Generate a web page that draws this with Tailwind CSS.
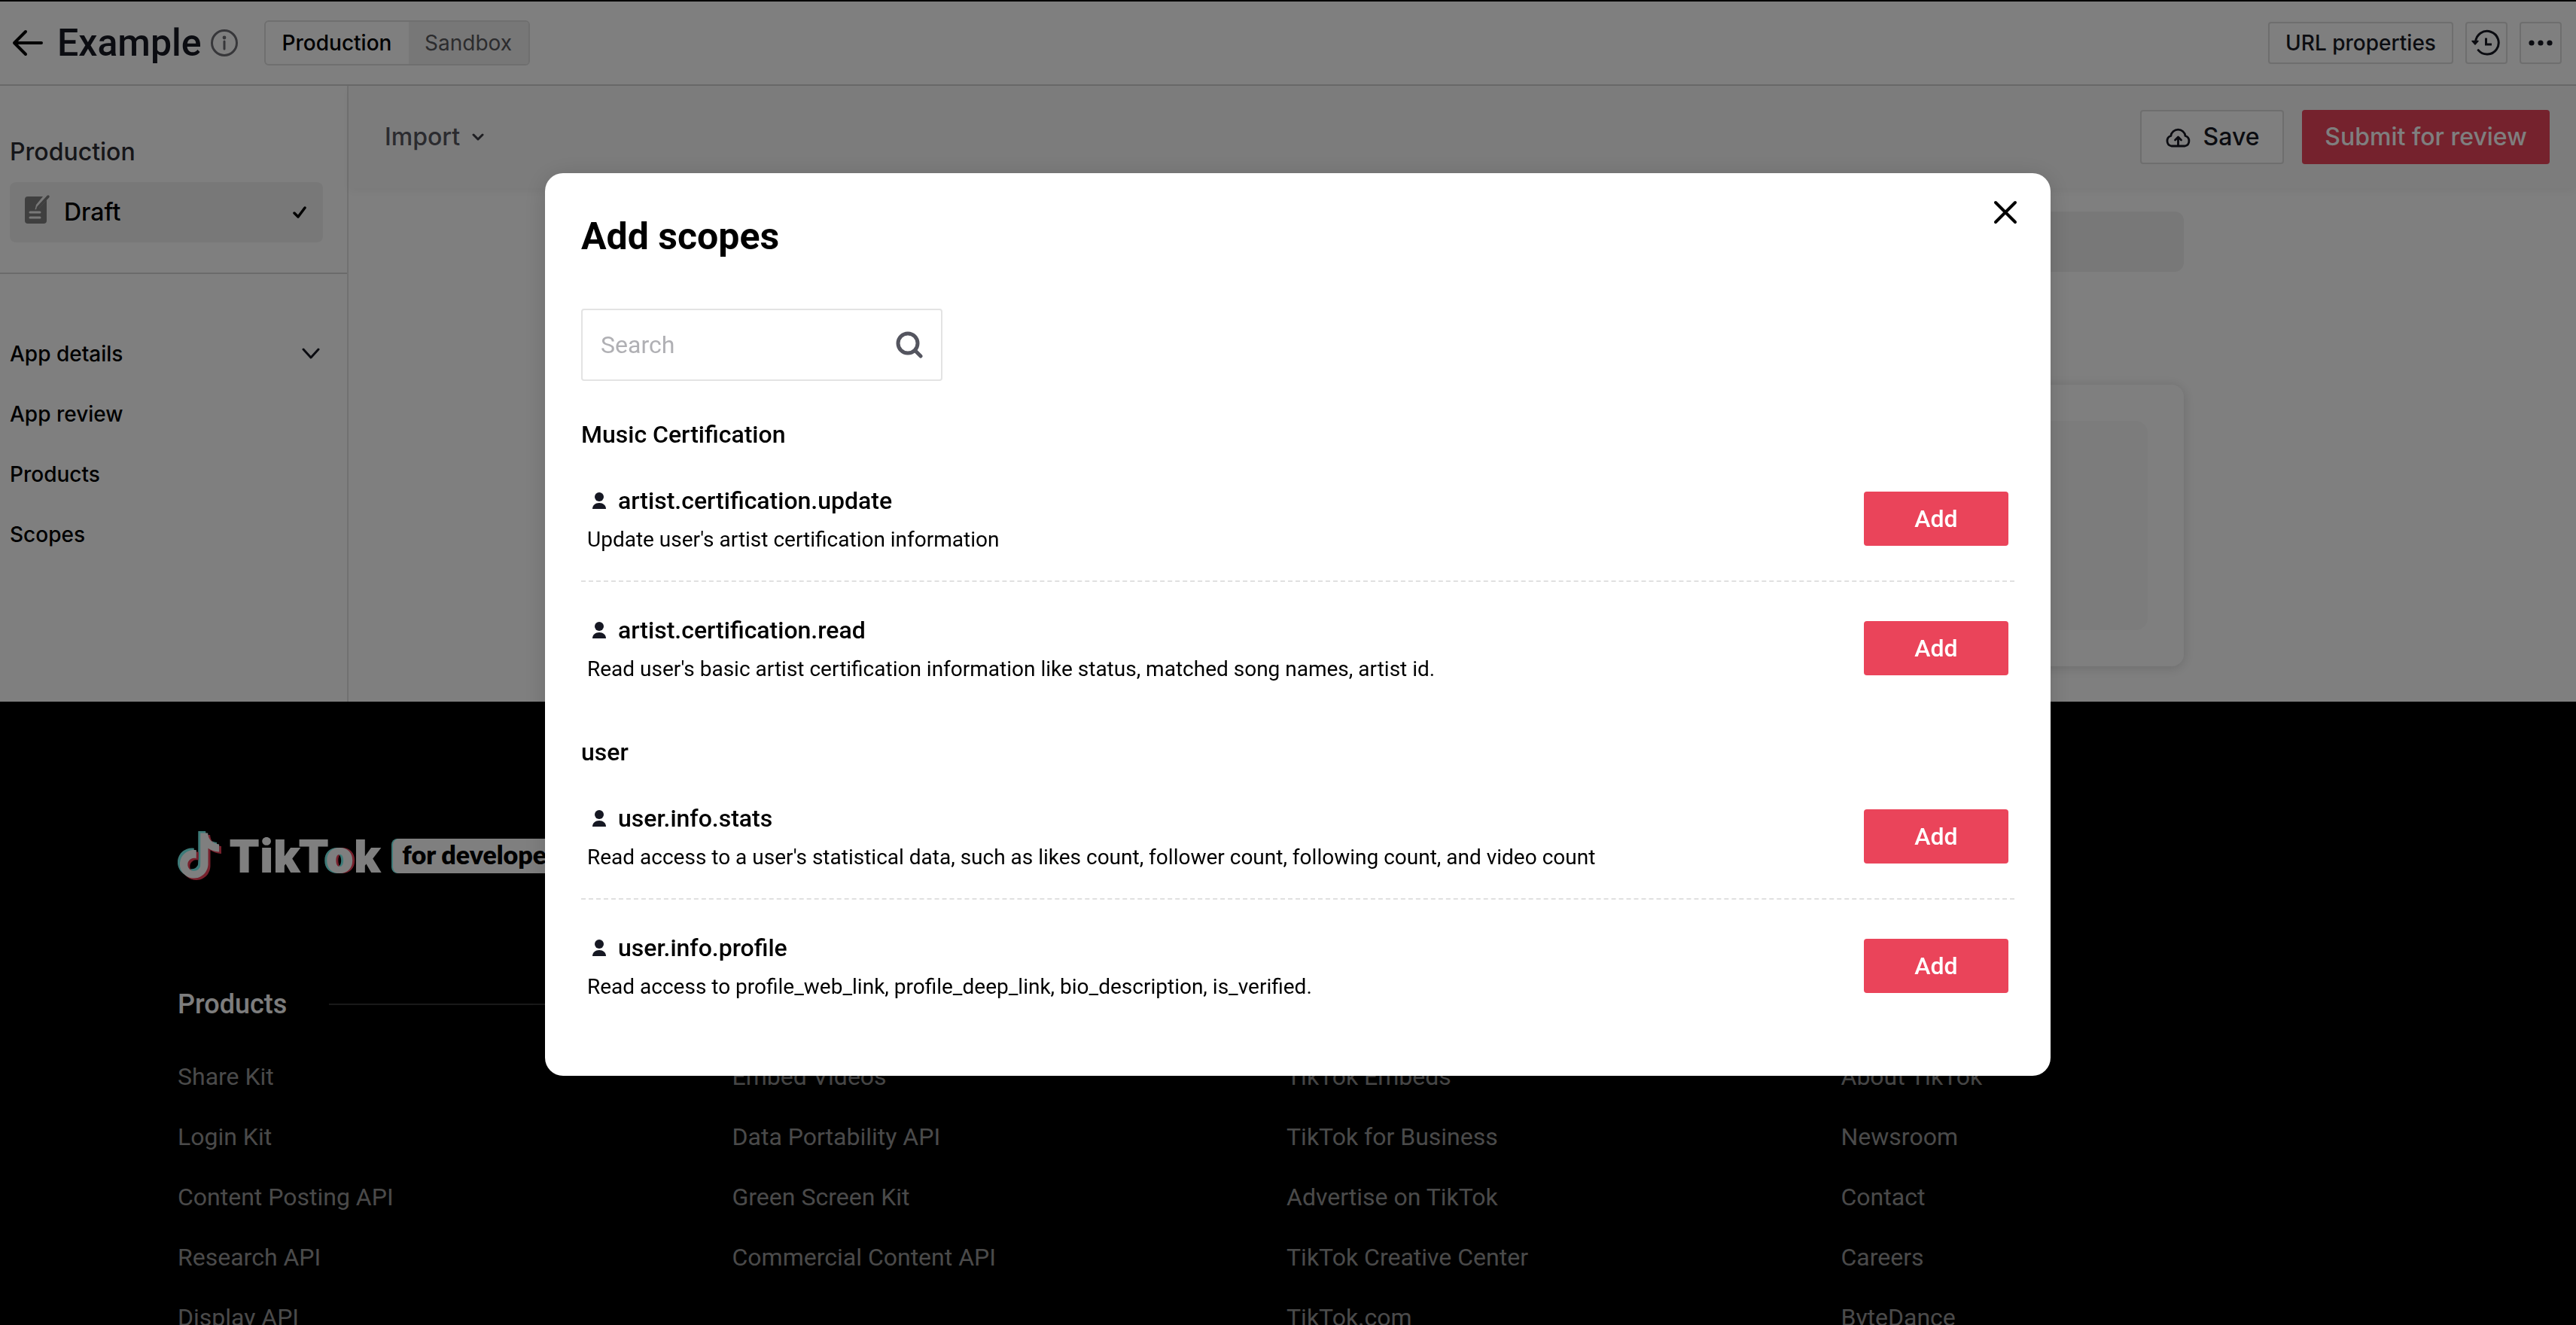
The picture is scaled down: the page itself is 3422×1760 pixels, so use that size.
<!DOCTYPE html>
<html lang="en">
<head>
<meta charset="utf-8">
<title>Example - Add scopes</title>
<script src="https://cdn.jsdelivr.net/npm/@tailwindcss/browser@4"></script>
</head>
<body class="h-screen overflow-hidden bg-black font-['Inter',sans-serif] text-[#161823]">

<div class="border-t-2 border-black bg-white">
  <header class="flex h-28 items-center justify-between border-b-2 border-[#d2d2d2] pr-[19px] pl-4">
    <div class="flex items-center">
      <button type="button" aria-label="Back">
        <svg class="h-9 w-[42px]" viewBox="0 0 42 36" fill="none" stroke="#000" stroke-width="4" stroke-linecap="round" stroke-linejoin="round"><path d="M18 3 3 18l15 15M3 18h36"/></svg>
      </button>
      <h1 class="pl-[18px] font-['Roboto',sans-serif] text-[50px] leading-14 font-medium">Example</h1>
      <svg class="ml-3 size-9" viewBox="0 0 36 36" fill="none"><circle cx="18" cy="18" r="16.5" stroke="#6e6e75" stroke-width="3"/><path d="M18 16v10" stroke="#6e6e75" stroke-width="3" stroke-linecap="round"/><circle cx="18" cy="11" r="2.4" fill="#6e6e75"/></svg>
      <div class="ml-[35px] flex h-15 overflow-hidden rounded-md border-2 border-[#dedede] text-[28px]">
        <button type="button" class="w-[190px] font-medium text-black">Production</button>
        <button type="button" class="w-[159px] bg-[#eeeeee] text-[#58585c]">Sandbox</button>
      </div>
    </div>
    <div class="flex gap-4">
      <button type="button" class="h-14 w-[246px] rounded border-2 border-[#dcdcdc] text-[28px] font-medium">URL properties</button>
      <button type="button" aria-label="History" class="flex size-14 items-center justify-center rounded border-2 border-[#dcdcdc]">
        <svg class="size-10" viewBox="0 0 40 40" fill="none" stroke="#161823" stroke-width="3"><path d="M5.6 19A15.3 15.3 0 1 1 9.2 29.6" stroke-linecap="round"/><path d="M19.5 13.5V22H27"/><path d="M1 17.5h8L5 22z" fill="#161823" stroke-width="1.5" stroke-linejoin="round"/></svg>
      </button>
      <button type="button" aria-label="More" class="flex size-14 items-center justify-center rounded border-2 border-[#dcdcdc]">
        <svg class="h-2 w-8" viewBox="0 0 32 8" fill="#161823"><circle cx="4" cy="4" r="3.6"/><circle cx="16" cy="4" r="3.6"/><circle cx="28" cy="4" r="3.6"/></svg>
      </button>
    </div>
  </header>

  <div class="flex">
    <aside class="w-[463px] shrink-0 border-r-2 border-[#e3e3e3] pb-[182px]">
      <div class="border-b-2 border-[#d6d6d6] pt-16 pr-8 pb-10 pl-[13px]">
        <h2 class="text-[32px] leading-12 font-medium text-[#2c2c33]">Production</h2>
        <button type="button" class="mt-4 flex h-20 w-full items-center rounded-lg bg-[#f1f1f1] pl-[18px] text-black">
          <svg class="mb-2 h-10 w-9 shrink-0" viewBox="0 0 36 40"><path fill="#7e7e7e" d="M6 3h20l-9 11-1.500 6.500 5.500-2 10-11V35a4 4 0 0 1-4 4H6a4 4 0 0 1-4-4V7a4 4 0 0 1 4-4z"/><path d="M33 3 20 17l-1 2" fill="none" stroke="#7e7e7e" stroke-width="3.500" stroke-linecap="round"/><path d="M9 24h13M9 31h13" stroke="#f1f1f1" stroke-width="3" stroke-linecap="round"/></svg>
          <span class="ml-[18px] text-[32px] font-medium">Draft</span>
          <svg class="mr-[22px] ml-auto h-4 w-[18px]" viewBox="0 0 18 16" fill="none" stroke="#000" stroke-width="3.500" stroke-linecap="round" stroke-linejoin="round"><path d="M2 9l5 5L16 2"/></svg>
        </button>
      </div>
      <nav class="flex flex-col pt-[66px] pl-[13px] text-[28px] leading-20 font-medium text-black">
        <a href="#details" class="flex items-center justify-between pr-9">App details
          <svg class="h-4 w-6" viewBox="0 0 24 16" fill="none" stroke="#161823" stroke-width="3" stroke-linecap="round" stroke-linejoin="round"><path d="M2 2l10 11L22 2"/></svg>
        </a>
        <a href="#review">App review</a>
        <a href="#products">Products</a>
        <a href="#scopes">Scopes</a>
      </nav>
    </aside>

    <main class="min-w-0 flex-1">
      <div class="flex h-[136px] items-center justify-between bg-[#f8f8f8] pr-[35px] pl-12 shadow-[0_4px_12px_rgba(0,0,0,0.05)]">
        <button type="button" class="flex items-center gap-4 text-[32px] font-medium text-[#57575f]">Import
          <svg class="h-[10px] w-4" viewBox="0 0 16 10" fill="none" stroke="#3c3c44" stroke-width="3" stroke-linecap="round" stroke-linejoin="round"><path d="M2 2l6 6 6-6"/></svg>
        </button>
        <div class="flex gap-6 text-[32px] font-medium">
          <button type="button" class="flex h-18 w-[191px] items-center justify-center gap-4 rounded border-2 border-[#dcdcdc] bg-white">
            <svg class="h-[27px] w-[35px]" viewBox="0 0 35 27" fill="none" stroke="#161823" stroke-width="2.800" stroke-linecap="round" stroke-linejoin="round"><path d="M8.500 25a7 7 0 0 1-.7-13.500A9.700 9.700 0 0 1 27 11.500 7 7 0 0 1 26.500 25z"/><path d="M17.500 24V13.500M13.500 17l4-4 4 4"/></svg>
            Save
          </button>
          <button type="button" class="h-18 w-[329px] rounded bg-[#ea445a] text-white">Submit for review</button>
        </div>
      </div>
      <div class="mx-auto w-full max-w-[1916px] pt-[31px]">
        <div class="h-20 rounded-xl bg-[#f1f1f1]"></div>
        <div class="mt-[150px] h-[374px] rounded-2xl p-12 shadow-[0_2px_16px_rgba(0,0,0,0.16)]">
          <div class="h-full rounded-2xl bg-[#f8f8f8]"></div>
        </div>
      </div>
    </main>
  </div>
</div>

<footer class="bg-black pt-[171px] pr-[240px] pl-[236px] font-['Roboto',sans-serif]">
  <div class="flex h-[68px] items-center">
    <svg class="h-[66px] w-[58px]" viewBox="0 0 58 66">
      <defs><path id="note" d="M12.525.02c1.31-.02 2.61-.01 3.91-.02.08 1.53.63 3.09 1.75 4.17 1.12 1.11 2.7 1.62 4.24 1.79v4.03c-1.44-.05-2.89-.35-4.2-.97-.57-.26-1.1-.59-1.62-.93-.01 2.92.01 5.84-.02 8.75-.08 1.4-.54 2.79-1.35 3.94-1.31 1.92-3.58 3.17-5.91 3.21-1.43.08-2.86-.31-4.08-1.03-2.02-1.19-3.44-3.37-3.65-5.71-.02-.5-.03-1-.01-1.49.18-1.9 1.12-3.72 2.58-4.96 1.66-1.44 3.98-2.13 6.15-1.72.02 1.48-.04 2.96-.04 4.44-.99-.32-2.15-.23-3.02.37-.63.41-1.11 1.04-1.36 1.75-.21.51-.15 1.07-.14 1.61.24 1.64 1.82 3.02 3.5 2.87 1.12-.01 2.19-.66 2.77-1.61.19-.33.4-.67.41-1.06.1-1.79.06-3.57.07-5.36.01-4.03-.01-8.05.02-12.07z"/></defs>
      <use href="#note" transform="translate(-4 0) scale(2.5)" fill="#7af5f0"/>
      <use href="#note" transform="translate(2 5) scale(2.5)" fill="#ee4058"/>
      <use href="#note" transform="translate(-1 2.500) scale(2.5)" fill="#fff"/>
    </svg>
    <span class="ml-[10px] font-['Inter',sans-serif] text-[60px] leading-[68px] font-black text-white">TikT<span class="[text-shadow:-3px_0_#7af5f0,3px_0_#ee4058]">o</span>k</span>
    <span class="ml-4 h-[46px] rounded-lg bg-white px-3 font-['Lato',sans-serif] text-[34px] leading-[42px] font-extrabold whitespace-nowrap text-black shadow-[-2px_0_#7af5f0,2px_0_#ee4058]">for developers</span>
  </div>
  <div class="mt-[139px] flex w-1/2 items-center gap-14 pr-12">
    <h2 class="text-[36px] leading-12 font-medium text-[#fafafa]">Products</h2>
    <div class="h-[2px] flex-1 bg-[#333333]"></div>
  </div>
  <div class="mt-8 grid grid-cols-4 text-[32px] leading-20 text-[#949494]">
    <nav class="flex flex-col"><a href="#share">Share Kit</a><a href="#login">Login Kit</a><a href="#posting">Content Posting API</a><a href="#research">Research API</a><a href="#display">Display API</a></nav>
    <nav class="flex flex-col"><a href="#embed">Embed Videos</a><a href="#portability">Data Portability API</a><a href="#green">Green Screen Kit</a><a href="#commercial">Commercial Content API</a></nav>
    <nav class="flex flex-col"><a href="#embeds">TikTok Embeds</a><a href="#business">TikTok for Business</a><a href="#advertise">Advertise on TikTok</a><a href="#creative">TikTok Creative Center</a><a href="#tiktok">TikTok.com</a></nav>
    <nav class="flex flex-col"><a href="#about">About TikTok</a><a href="#newsroom">Newsroom</a><a href="#contact">Contact</a><a href="#careers">Careers</a><a href="#bytedance">ByteDance</a></nav>
  </div>
</footer>

<svg class="hidden"><symbol id="person" viewBox="0 0 18 24"><circle cx="9" cy="7" r="6" fill="#161823"/><path d="M0 23c0-5 4-8 9-8s9 3 9 8z" fill="#161823"/></symbol></svg>

<div class="fixed inset-0 flex items-start justify-center bg-black/50 pt-[230px] pl-[26px] font-['Roboto',sans-serif] text-black">
  <section role="dialog" aria-modal="true" aria-labelledby="title" class="relative w-full max-w-[2000px] rounded-3xl bg-white px-12 pt-[52px] pb-[62px] shadow-[0_4px_32px_rgba(0,0,0,0.15)]">
    <button type="button" aria-label="Close" class="absolute top-9 right-11">
      <svg class="size-8" viewBox="0 0 32 32" stroke="#000" stroke-width="4" stroke-linecap="round"><path d="M3 3l26 26M29 3 3 29"/></svg>
    </button>
    <h2 id="title" class="text-[50px] leading-16 font-bold">Add scopes</h2>
    <label class="mt-16 flex h-24 w-[480px] items-center rounded border-2 border-[#e3e3e3] pr-6 pl-6">
      <input type="text" placeholder="Search" aria-label="Search" class="min-w-0 flex-1 text-[32px] outline-none placeholder:text-[#b0b0b4]">
      <svg class="size-9" viewBox="0 0 36 36" fill="none" stroke="#54555f" stroke-width="5"><circle cx="16" cy="16" r="13"/><path d="M26 26l7 7" stroke-linecap="round"/></svg>
    </label>

    <h3 class="mt-[47px] text-[32px] leading-12 font-medium">Music Certification</h3>
    <div class="flex items-center justify-between border-b-2 border-dashed border-[#e0e0e0] px-2 pt-[34px] pb-7">
      <div class="pt-1">
        <div class="flex items-center gap-4 pl-[7px] text-[32px] leading-[52px] font-medium"><svg class="h-6 w-[18px]"><use href="#person"/></svg>artist.certification.update</div>
        <p class="text-[28px] leading-[52px]">Update user's artist certification information</p>
      </div>
      <button type="button" class="h-18 w-48 rounded bg-[#ea445a] text-[32px] font-medium text-white">Add</button>
    </div>
    <div class="flex items-center justify-between px-2 pt-[34px] pb-[30px]">
      <div class="pt-1">
        <div class="flex items-center gap-4 pl-[7px] text-[32px] leading-[52px] font-medium"><svg class="h-6 w-[18px]"><use href="#person"/></svg>artist.certification.read</div>
        <p class="text-[28px] leading-[52px]">Read user's basic artist certification information like status, matched song names, artist id.</p>
      </div>
      <button type="button" class="h-18 w-48 rounded bg-[#ea445a] text-[32px] font-medium text-white">Add</button>
    </div>

    <h3 class="mt-[30px] text-[32px] leading-12 font-medium">user</h3>
    <div class="flex items-center justify-between border-b-2 border-dashed border-[#e0e0e0] px-2 pt-[34px] pb-7">
      <div class="pt-1">
        <div class="flex items-center gap-4 pl-[7px] text-[32px] leading-[52px] font-medium"><svg class="h-6 w-[18px]"><use href="#person"/></svg>user.info.stats</div>
        <p class="text-[28px] leading-[52px]">Read access to a user's statistical data, such as likes count, follower count, following count, and video count</p>
      </div>
      <button type="button" class="h-18 w-48 rounded bg-[#ea445a] text-[32px] font-medium text-white">Add</button>
    </div>
    <div class="flex items-center justify-between px-2 pt-[34px] pb-[30px]">
      <div class="pt-1">
        <div class="flex items-center gap-4 pl-[7px] text-[32px] leading-[52px] font-medium"><svg class="h-6 w-[18px]"><use href="#person"/></svg>user.info.profile</div>
        <p class="text-[28px] leading-[52px]">Read access to profile_web_link, profile_deep_link, bio_description, is_verified.</p>
      </div>
      <button type="button" class="h-18 w-48 rounded bg-[#ea445a] text-[32px] font-medium text-white">Add</button>
    </div>
  </section>
</div>
</body>
</html>
